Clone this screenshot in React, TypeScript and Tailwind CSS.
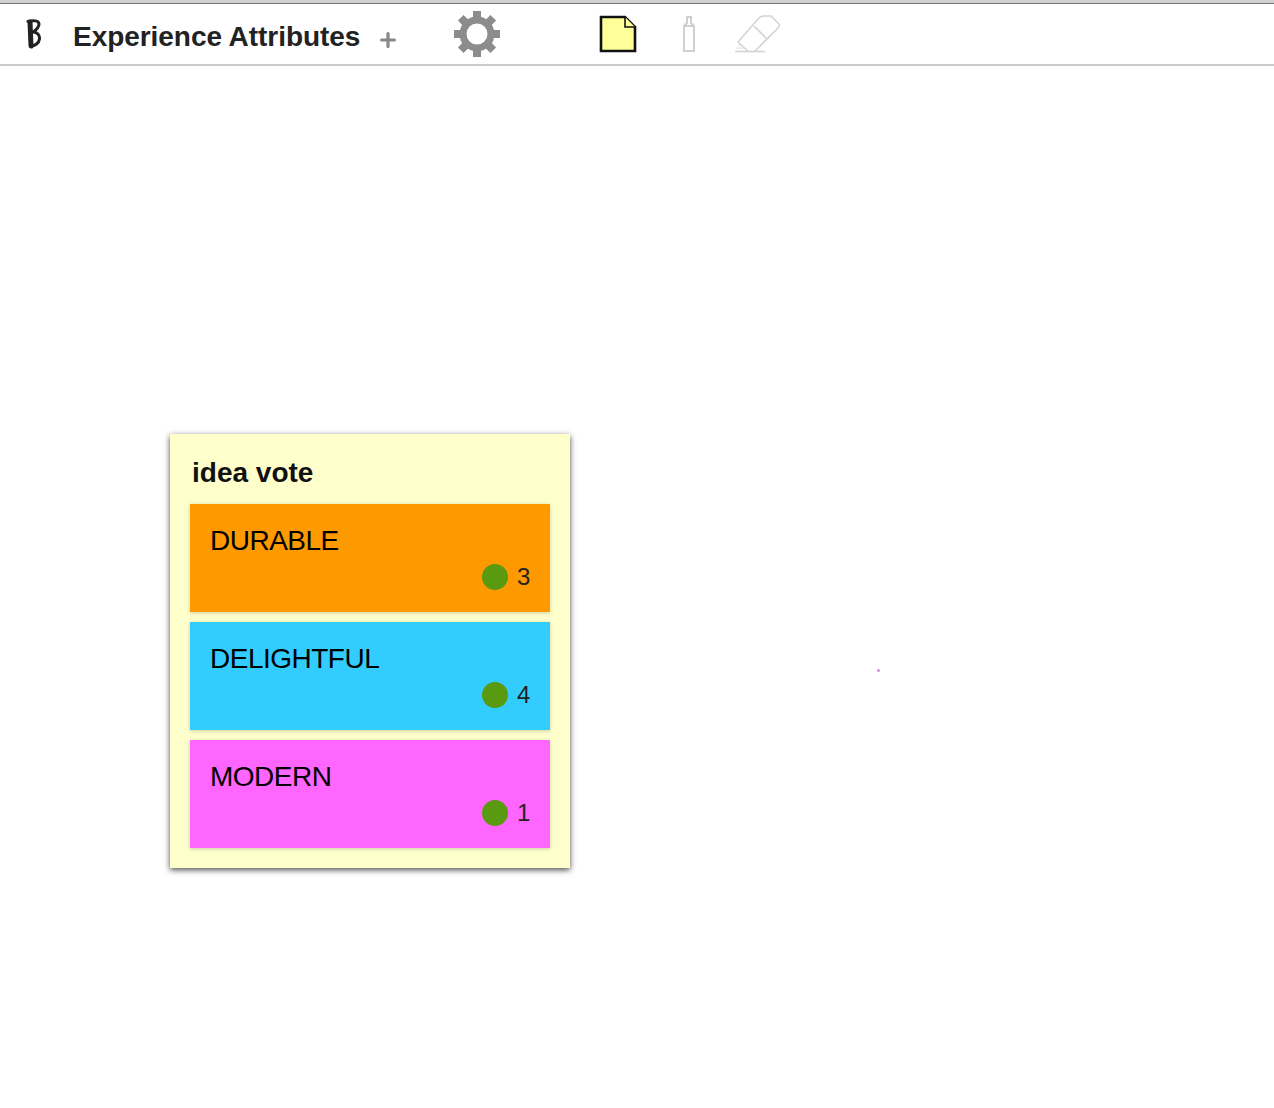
import { Plus } from 'lucide-react';

const ideas = [
  { label: 'DURABLE', votes: 3, color: 'bg-[#ff9900]' },
  { label: 'DELIGHTFUL', votes: 4, color: 'bg-[#33ccff]' },
  { label: 'MODERN', votes: 1, color: 'bg-[#ff66ff]' },
];

function Logo() {
  return (
    <svg width="18" height="32" viewBox="0 0 18 32" fill="none" stroke="#222" strokeLinecap="round" strokeLinejoin="round" className="blur-[0.6px]">
      <path d="M5 4 L6 28" strokeWidth="5" />
      <path d="M3 3.5 C8 2 14 2.5 14 6 C14 9 11 12 8 14 C12 14 15 17 14.5 21 C14 25 10 28 6 28" strokeWidth="3" />
    </svg>
  );
}

function Gear() {
  const teeth = [0, 45, 90, 135, 180, 225, 270, 315];
  return (
    <svg width="48" height="48" viewBox="0 0 48 48" className="blur-[0.7px]">
      {teeth.map((a) => (
        <rect key={a} x="20" y="1" width="8" height="10" fill="#8c8c8c" transform={`rotate(${a} 24 24)`} />
      ))}
      <circle cx="24" cy="24" r="14" fill="none" stroke="#8c8c8c" strokeWidth="7" />
    </svg>
  );
}

function NoteIcon() {
  return (
    <svg width="38" height="38" viewBox="0 0 38 38">
      <path d="M2 2 H26 L36 12 V36 H2 Z" fill="#ffff99" stroke="#111" strokeWidth="2.6" />
      <path d="M26 2 V12 H36" fill="#ffff99" stroke="#111" strokeWidth="1.6" />
    </svg>
  );
}

function PencilIcon() {
  return (
    <svg width="14" height="38" viewBox="0 0 14 38" fill="none" stroke="#d0d0d0" strokeWidth="2">
      <path d="M2 36 V11 L5 8 V2 H9 V8 L12 11 V36 Z" />
      <path d="M2 11 H12" />
    </svg>
  );
}

function EraserIcon() {
  return (
    <svg width="46" height="38" viewBox="0 0 46 38" fill="none" stroke="#d4d4d4" strokeWidth="1.6">
      <path d="M13 36 L3 27 L24 3 Q26 1 29 1 H36 L44 9 Q45 11 43 13 L20 36" />
      <path d="M19 11 L32 24" />
      <path d="M0 36.5 H30" />
      <path d="M2 33 H9 M4 30 H7" strokeDasharray="1.5 1.5" />
    </svg>
  );
}

export default function App() {
  return (
    <div className="relative h-[1108px] bg-white overflow-hidden font-['Liberation_Sans',Arial,sans-serif]">
      <div className="h-[4px] bg-[#d0d0d0] border-b border-[#777]" />
      <header className="flex h-[62px] items-center border-b-2 border-[#cccccc]">
        <div className="ml-[25px] w-[18px]">
          <Logo />
        </div>
        <h1 className="ml-[30px] pt-[6px] text-[28px] font-bold tracking-[-0.05px] text-[#222]">Experience Attributes</h1>
        <Plus size={22} strokeWidth={3.5} className="ml-[17px] mt-[12px] text-[#888]" />
        <div className="ml-[54px]">
          <Gear />
        </div>
        <div className="ml-[98px]">
          <NoteIcon />
        </div>
        <div className="ml-[45px]">
          <PencilIcon />
        </div>
        <div className="ml-[39px]">
          <EraserIcon />
        </div>
      </header>

      <section className="absolute left-[170px] top-[434px] w-[400px] bg-[#ffffcc] px-[20px] pb-[20px] shadow-[0_2px_6px_rgba(0,0,0,0.7)]">
        <h2 className="ml-[2px] flex h-[70px] items-center pt-[8px] text-[28px] font-bold text-[#111]">idea vote</h2>
        <div className="flex flex-col gap-[10px]">
          {ideas.map((idea) => (
            <div key={idea.label} className={`relative h-[108px] ${idea.color} px-[20px] pt-[21px] shadow-[0_1px_4px_rgba(0,0,0,0.2)]`}>
              <div className="text-[28px] leading-[32px] tracking-[-0.5px] text-black">{idea.label}</div>
              <div className="absolute bottom-[22px] right-[20px] flex items-center">
                <span className="h-[26px] w-[26px] rounded-full bg-[#5a9a10]" />
                <span className="ml-[9px] w-[13px] pt-[1px] text-[24px] leading-[26px] text-[#222]">{idea.votes}</span>
              </div>
            </div>
          ))}
        </div>
      </section>

      <span className="absolute left-[877px] top-[669px] h-[3px] w-[3px] rounded-full bg-[#e080f0]" />
    </div>
  );
}
